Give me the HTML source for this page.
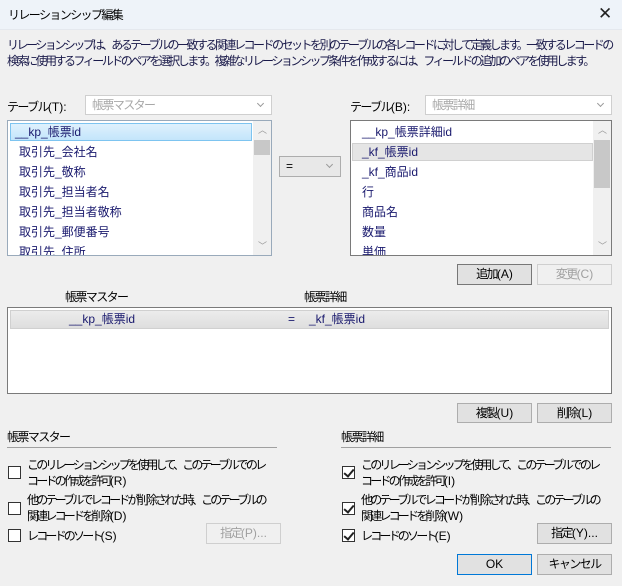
<!DOCTYPE html>
<html><head><meta charset="utf-8"><style>
*{box-sizing:border-box;margin:0;padding:0}
body{width:622px;height:586px;background:#f0f0f0;font-family:"Liberation Sans","Noto Sans CJK JP",sans-serif;font-size:12px;color:#000;position:relative;overflow:hidden}
.a{position:absolute;white-space:nowrap}
.t{letter-spacing:-1.6px}
.d2{letter-spacing:-2.5px}
.c2{letter-spacing:-2.8px}
.l{letter-spacing:0}
.title{left:0;top:0;width:622px;height:30px;background:#eef3f9;border-bottom:1px solid #e4e8ee}
.box{position:absolute;background:#fff;border:1px solid #7a7a7a}
.combo{position:absolute;background:#fff;border:1px solid #cfcfcf;color:#a8a8a8;padding-left:6px;line-height:18px}
.combo:after{content:"";position:absolute;right:8px;top:5px;width:4px;height:4px;border-right:1px solid #999;border-bottom:1px solid #999;transform:rotate(45deg)}
.btn{position:absolute;background:#e1e1e1;border:1px solid #adadad;text-align:center;line-height:19px}
.btn.d{background:#f0f0f0;border-color:#cfcfcf;color:#a0a0a0}
.item{position:absolute;color:#1a1a6e;height:20px;line-height:20px;font-size:12px}
.sb{position:absolute;background:#f0f0f0}
.cb{position:absolute;width:13px;height:13px;border:1px solid #333;background:#fff}
.cb.c:after{content:"";position:absolute;left:3px;top:0px;width:4px;height:8px;border-right:2px solid #222;border-bottom:2px solid #222;transform:rotate(40deg)}
</style></head><body>
<div class="a title"></div>
<div class="a t" style="left:8px;top:6px;font-size:12px">リレーションシップ編集</div>
<div class="a" style="left:598px;top:4px;font-size:17px;color:#222">✕</div>
<div class="a d2" style="left:7px;top:37px;line-height:16px;color:#1a1a4a">リレーションシップは、あるテーブルの一致する関連レコードのセットを別のテーブルの各レコードに対して定義します。一致するレコードの<br>検索に使用するフィールドのペアを選択します。複雑なリレーションシップ条件を作成するには、フィールドの追加のペアを使用します。</div>

<div class="a t" style="left:7px;top:98px">テーブル<span class="l">(T):</span></div>
<div class="combo t" style="left:85px;top:95px;width:187px;height:20px">帳票マスター</div>
<div class="box" style="left:7px;top:120px;width:265px;height:136px;border-color:#9ab">
 <div style="position:absolute;left:2px;top:2px;width:242px;height:18px;background:linear-gradient(#dff1fd,#c3e5fb);border:1px solid #7dc4f0"></div>
 <div class="item" style="left:7px;top:1px">__kp_帳票id</div>
 <div class="item" style="left:11px;top:21px">取引先_会社名</div>
 <div class="item" style="left:11px;top:41px">取引先_敬称</div>
 <div class="item" style="left:11px;top:61px">取引先_担当者名</div>
 <div class="item" style="left:11px;top:81px">取引先_担当者敬称</div>
 <div class="item" style="left:11px;top:101px">取引先_郵便番号</div>
 <div class="item" style="left:11px;top:121px;height:13px;overflow:hidden">取引先_住所</div>
 <div class="sb" style="left:245px;top:0;width:18px;height:134px"></div>
 <div class="sb" style="left:246px;top:19px;width:16px;height:15px;background:#c8c8c8"></div>
 <div class="a" style="left:250px;top:2px;color:#999;font-size:9px">︿</div>
 <div class="a" style="left:250px;top:118px;color:#999;font-size:9px">﹀</div>
</div>

<div class="combo" style="left:279px;top:156px;width:62px;height:21px;color:#000;border-color:#adadad;background:#e8e8e8;line-height:19px">=</div>

<div class="a t" style="left:350px;top:98px">テーブル<span class="l">(B):</span></div>
<div class="combo t" style="left:425px;top:95px;width:187px;height:20px">帳票詳細</div>
<div class="box" style="left:350px;top:120px;width:262px;height:136px">
 <div style="position:absolute;left:1px;top:22px;width:241px;height:18px;background:#e5e5e5;border:1px solid #d0d0d0"></div>
 <div class="item" style="left:11px;top:1px">__kp_帳票詳細id</div>
 <div class="item" style="left:11px;top:21px">_kf_帳票id</div>
 <div class="item" style="left:11px;top:41px">_kf_商品id</div>
 <div class="item" style="left:11px;top:61px">行</div>
 <div class="item" style="left:11px;top:81px">商品名</div>
 <div class="item" style="left:11px;top:101px">数量</div>
 <div class="item" style="left:11px;top:121px;height:13px;overflow:hidden">単価</div>
 <div class="sb" style="left:242px;top:0;width:18px;height:134px"></div>
 <div class="sb" style="left:243px;top:19px;width:16px;height:48px;background:#c8c8c8"></div>
 <div class="a" style="left:247px;top:2px;color:#999;font-size:9px">︿</div>
 <div class="a" style="left:247px;top:118px;color:#999;font-size:9px">﹀</div>
</div>

<div class="btn t" style="left:457px;top:264px;width:75px;height:21px;border-color:#777">追加<span class="l">(A)</span></div>
<div class="btn d t" style="left:537px;top:264px;width:75px;height:21px">変更<span class="l">(C)</span></div>

<div class="a t" style="left:65px;top:288px">帳票マスター</div>
<div class="a t" style="left:304px;top:288px">帳票詳細</div>
<div class="box" style="left:7px;top:307px;width:605px;height:87px">
 <div style="position:absolute;left:2px;top:2px;width:599px;height:19px;background:linear-gradient(#ececec,#dedede);border:1px solid #d0d0d0"></div>
 <div class="item" style="left:61px;top:1px">__kp_帳票id</div>
 <div class="item" style="left:280px;top:1px">=</div>
 <div class="item" style="left:301px;top:1px">_kf_帳票id</div>
</div>

<div class="btn t" style="left:457px;top:403px;width:75px;height:20px">複製<span class="l">(U)</span></div>
<div class="btn t" style="left:537px;top:403px;width:75px;height:20px">削除<span class="l">(L)</span></div>

<div class="a t" style="left:7px;top:428px">帳票マスター</div>
<div class="a" style="left:7px;top:447px;width:270px;height:1px;background:#a0a0a0"></div>
<div class="a t" style="left:341px;top:428px">帳票詳細</div>
<div class="a" style="left:341px;top:447px;width:270px;height:1px;background:#a0a0a0"></div>

<div class="cb" style="left:8px;top:466px"></div>
<div class="a c2" style="left:27px;top:457px;line-height:16px">このリレーションシップを使用して、このテーブルでのレ<br>コードの作成を許可<span class="l">(R)</span></div>
<div class="cb" style="left:8px;top:502px"></div>
<div class="a c2" style="left:27px;top:492px;line-height:16px">他のテーブルでレコードが削除された時、このテーブルの<br>関連レコードを削除<span class="l">(D)</span></div>
<div class="cb" style="left:8px;top:529px"></div>
<div class="a c2" style="left:27px;top:527px">レコードのソート<span class="l">(S)</span></div>
<div class="btn d t" style="left:206px;top:523px;width:75px;height:21px">指定<span class="l">(P)...</span></div>

<div class="cb c" style="left:342px;top:466px"></div>
<div class="a c2" style="left:361px;top:457px;line-height:16px">このリレーションシップを使用して、このテーブルでのレ<br>コードの作成を許可<span class="l">(I)</span></div>
<div class="cb c" style="left:342px;top:502px"></div>
<div class="a c2" style="left:361px;top:492px;line-height:16px">他のテーブルでレコードが削除された時、このテーブルの<br>関連レコードを削除<span class="l">(W)</span></div>
<div class="cb c" style="left:342px;top:529px"></div>
<div class="a c2" style="left:361px;top:527px">レコードのソート<span class="l">(E)</span></div>
<div class="btn t" style="left:537px;top:523px;width:75px;height:21px">指定<span class="l">(Y)...</span></div>

<div class="btn" style="left:457px;top:554px;width:75px;height:21px;border:1px solid #0078d7">OK</div>
<div class="btn t" style="left:537px;top:554px;width:75px;height:21px">キャンセル</div>
</body></html>
